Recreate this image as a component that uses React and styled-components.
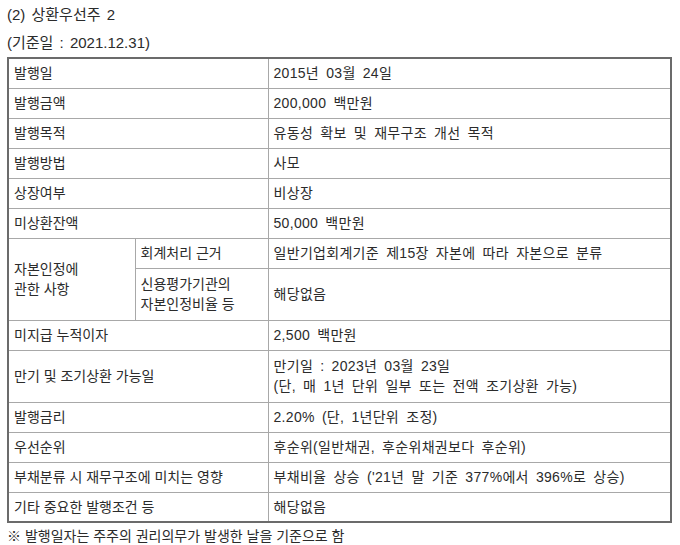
import styled, { createGlobalStyle } from "styled-components";

const GlobalStyle = createGlobalStyle`
  html, body {
    margin: 0;
    padding: 0;
    background: #ffffff;
  }
  body {
    font-family: "Liberation Sans", "Noto Sans CJK KR", sans-serif;
    color: #2b2b2b;
  }
`;

const rows = [
  { label: "발행일", value: "2015년 03월 24일" },
  { label: "발행금액", value: "200,000 백만원" },
  { label: "발행목적", value: "유동성 확보 및 재무구조 개선 목적" },
  { label: "발행방법", value: "사모" },
  { label: "상장여부", value: "비상장" },
  { label: "미상환잔액", value: "50,000 백만원" },
];

const rowsAfter = [
  { label: "미지급 누적이자", value: ["2,500 백만원"] },
  {
    label: "만기 및 조기상환 가능일",
    value: ["만기일 : 2023년 03월 23일", "(단, 매 1년 단위 일부 또는 전액 조기상환 가능)"],
  },
  { label: "발행금리", value: ["2.20% (단, 1년단위 조정)"] },
  { label: "우선순위", value: ["후순위(일반채권, 후순위채권보다 후순위)"] },
  {
    label: "부채분류 시 재무구조에 미치는 영향",
    value: ["부채비율 상승 ('21년 말 기준 377%에서 396%로 상승)"],
  },
  { label: "기타 중요한 발행조건 등", value: ["해당없음"] },
];

function App() {
  return (
    <Page>
      <GlobalStyle />
      <Title>(2) 상환우선주 2</Title>
      <Title>(기준일 : 2021.12.31)</Title>
      <Table>
        <colgroup>
          <col style={{ width: "127px" }} />
          <col style={{ width: "133px" }} />
          <col />
        </colgroup>
        <tbody>
          {rows.map((r) => (
            <Tr key={r.label}>
              <Td colSpan={2}>{r.label}</Td>
              <Td $value>{r.value}</Td>
            </Tr>
          ))}
          <Tr>
            <Td rowSpan={2}>
              <Line>자본인정에</Line>
              <Line>관한 사항</Line>
            </Td>
            <Td>회계처리 근거</Td>
            <Td $value>일반기업회계기준 제15장 자본에 따라 자본으로 분류</Td>
          </Tr>
          <Tr $tall>
            <Td>
              <Line>신용평가기관의</Line>
              <Line>자본인정비율 등</Line>
            </Td>
            <Td $value>해당없음</Td>
          </Tr>
          {rowsAfter.map((r) => (
            <Tr key={r.label} $tall={r.value.length > 1}>
              <Td colSpan={2}>{r.label}</Td>
              <Td $value>
                {r.value.map((v) => (
                  <Line key={v}>{v}</Line>
                ))}
              </Td>
            </Tr>
          ))}
        </tbody>
      </Table>
      <Note>※ 발행일자는 주주의 권리의무가 발생한 날을 기준으로 함</Note>
    </Page>
  );
}

export default App;

const Page = styled.div`
  padding: 1px 8px 0 7px;
  width: 680px;
  box-sizing: border-box;
`;

const Title = styled.div`
  font-size: 15px;
  line-height: 28px;
  word-spacing: 2px;
  color: #2b2b2b;
`;

const Table = styled.table`
  border-collapse: collapse;
  width: 665px;
  border: 2px solid #6b6b6b;
  table-layout: fixed;
`;

const Tr = styled.tr`
  height: ${(p) => (p.$tall ? "52px" : "30px")};
`;

const Td = styled.td`
  border: 1px solid #a8a8a8;
  padding: 0 5px;
  font-size: 14px;
  line-height: 20px;
  vertical-align: middle;
  white-space: nowrap;
  word-spacing: ${(p) => (p.$value ? "3px" : "0")};
  letter-spacing: ${(p) => (p.$value ? "0.3px" : "0")};
`;

const Line = styled.div`
  line-height: 20px;
`;

const Note = styled.div`
  font-size: 14px;
  line-height: 20px;
  margin-top: 3px;
  color: #2b2b2b;
`;
